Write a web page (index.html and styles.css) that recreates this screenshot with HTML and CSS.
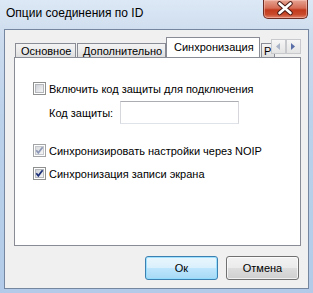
FILE: index.html
```html
<!DOCTYPE html>
<html lang="ru">

<head>
  <meta charset="UTF-8" />
  <title>Опции соединения по ID</title>
  <link rel="stylesheet" href="styles.css">
</head>

<body>
  <div class="window">
    <div class="titlebar">
      <span class="title">Опции соединения по ID</span>
      <div class="close">
        <svg width="45" height="19" viewBox="0 0 45 19">
          <path d="M16.5 4.5 L27.5 14 M27.5 4.5 L16.5 14" stroke="#4a1a14" stroke-width="4.6" stroke-linecap="round" />
          <path d="M16.5 4.5 L27.5 14 M27.5 4.5 L16.5 14" stroke="#ffffff" stroke-width="2.6" stroke-linecap="round" />
        </svg>
      </div>
    </div>

    <div class="client">
      <div class="tabs">
        <div class="tab t1">Основное</div>
        <div class="tab t2">Дополнительно</div>
        <div class="tab active">Синхронизация</div>
        <div class="tab t4">Р</div>
        <div class="scroller">
          <span class="sbtn"><svg width="5" height="7" viewBox="0 0 5 7"><path d="M4 0 L0 3.5 L4 7Z" fill="#aab4c8" /></svg></span>
          <span class="sbtn"><svg width="5" height="7" viewBox="0 0 5 7"><path d="M0 0 L4 3.5 L0 7Z" fill="#5a6fa8" /></svg></span>
        </div>
      </div>

      <div class="panel">
        <label class="row">
          <svg class="cb" width="13" height="13" viewBox="0 0 13 13">
            <defs><linearGradient id="g1" x1="0" y1="0" x2="1" y2="1"><stop offset="0" stop-color="#cbcfd5" /><stop offset="1" stop-color="#f7f7f7" /></linearGradient></defs>
            <rect x="0.5" y="0.5" width="12" height="12" fill="#fff" stroke="#8e8f8f" />
            <rect x="2.5" y="2.5" width="8" height="8" fill="url(#g1)" stroke="#b4b8bd" />
          </svg>
          <span>Включить код защиты для подключения</span>
        </label>

        <div class="field">
          <span>Код защиты:</span>
          <input class="input" type="text">
        </div>

        <label class="row r2">
          <svg class="cb" width="13" height="13" viewBox="0 0 13 13">
            <defs><linearGradient id="g2" x1="0" y1="0" x2="1" y2="1"><stop offset="0" stop-color="#d8dadd" /><stop offset="1" stop-color="#f7f7f7" /></linearGradient></defs>
            <rect x="0.5" y="0.5" width="12" height="12" fill="#fff" stroke="#a3a4a5" />
            <rect x="2.5" y="2.5" width="8" height="8" fill="url(#g2)" stroke="#c4c7cb" />
            <path d="M3.3 6.3 L5.3 8.8 L9.6 3.2" fill="none" stroke="#8c97b6" stroke-width="1.7" />
          </svg>
          <span>Синхронизировать настройки через NOIP</span>
        </label>

        <label class="row r3">
          <svg class="cb" width="13" height="13" viewBox="0 0 13 13">
            <defs><linearGradient id="g3" x1="0" y1="0" x2="1" y2="1"><stop offset="0" stop-color="#cbcfd5" /><stop offset="1" stop-color="#f7f7f7" /></linearGradient></defs>
            <rect x="0.5" y="0.5" width="12" height="12" fill="#fff" stroke="#8e8f8f" />
            <rect x="2.5" y="2.5" width="8" height="8" fill="url(#g3)" stroke="#b4b8bd" />
            <path d="M3.3 6.3 L5.3 8.8 L9.6 3.2" fill="none" stroke="#1c2f79" stroke-width="1.7" />
          </svg>
          <span>Синхронизация записи экрана</span>
        </label>
      </div>

      <div class="buttons">
        <button class="btn default">Ок</button>
        <button class="btn">Отмена</button>
      </div>
    </div>
  </div>
</body>

</html>
```

FILE: styles.css
```css
body {
  margin: 0;
  padding: 0;
  font-family: "Liberation Sans", Arial, sans-serif;
  font-size: 11px;
  color: #000;
}

.window {
  width: 313px;
  height: 293px;
  box-sizing: border-box;
  padding: 0 4px 4px 4px;
  display: flex;
  flex-direction: column;
  background: linear-gradient(180deg, #dce8f5 0%, #cddcee 12%, #bcd2eb 40%, #b3cbe8 100%);
}

.titlebar {
  height: 29px;
  display: flex;
  align-items: flex-start;
}

.title {
  font-size: 12px;
  padding: 6px 0 0 2px;
  color: #000;
}

.close {
  margin-left: auto;
  margin-right: 1px;
  width: 45px;
  height: 19px;
  box-sizing: border-box;
  border: 1px solid #6a2c24;
  border-top: none;
  border-radius: 0 0 5px 5px;
  background: linear-gradient(180deg, #e6a493 0%, #d56c55 45%, #c23a1e 55%, #c94a2c 80%, #e0826a 100%);
  box-shadow: inset 0 0 0 1px rgba(255, 210, 200, 0.45);
}

.close svg {
  display: block;
  margin: -1px 0 0 -1px;
}

.client {
  flex: 1;
  border: 1px solid #7587a0;
  background: #f0f0f0;
  padding: 7px 7px 8px 9px;
  display: flex;
  flex-direction: column;
}

.tabs {
  position: relative;
  height: 20px;
  display: flex;
  align-items: flex-end;
  padding-left: 1px;
  overflow: hidden;
}

.tab {
  box-sizing: border-box;
  height: 14px;
  border: 1px solid #898c95;
  border-bottom: none;
  background: linear-gradient(180deg, #f3f3f3 0%, #ebebeb 50%, #dedede 100%);
  padding: 1px 0 0 5px;
  line-height: 12px;
  white-space: nowrap;
  flex-shrink: 0;
}

.t1 {
  width: 61px;
  margin-right: 1px;
}

.t2 {
  width: 89px;
}

.tab.active {
  width: 94px;
  height: 21px;
  margin-bottom: -1px;
  background: #fff;
  padding: 3px 0 0 7px;
  position: relative;
  z-index: 1;
}

.t4 {
  margin-left: 1px;
  width: 14px;
  padding-left: 2px;
  overflow: hidden;
}

.scroller {
  position: absolute;
  right: 0;
  top: 2px;
  display: flex;
  z-index: 2;
}

.sbtn {
  width: 15px;
  height: 15px;
  box-sizing: border-box;
  border: 1px solid #c8c9cc;
  background: linear-gradient(180deg, #f6f6f6, #e4e4e4);
  display: flex;
  align-items: center;
  justify-content: center;
}

.panel {
  height: 189px;
  box-sizing: border-box;
  border: 1px solid #898c95;
  background: #fff;
  padding: 24px 0 0 18px;
  display: flex;
  flex-direction: column;
  align-items: flex-start;
}

.row {
  display: flex;
  align-items: center;
  gap: 3px;
  height: 13px;
  white-space: nowrap;
}

.cb {
  display: block;
  flex-shrink: 0;
}

.field {
  display: flex;
  align-items: center;
  margin: 6px 0 0 16px;
  height: 23px;
}

.input {
  margin: 0 0 0 7px;
  width: 119px;
  height: 23px;
  box-sizing: border-box;
  border: 1px solid #abadb3;
  border-top-color: #abadb3;
  border-left-color: #d5d7dd;
  border-right-color: #d5d7dd;
  border-bottom-color: #dfe3e9;
  background: #fff;
  padding: 0;
}

.r2 {
  margin-top: 20px;
}

.r3 {
  margin-top: 10px;
}

.buttons {
  margin-top: 10px;
  display: flex;
  justify-content: flex-end;
  gap: 8px;
  padding-right: 2px;
}

.btn {
  width: 73px;
  height: 24px;
  box-sizing: border-box;
  border: 1px solid #707070;
  border-radius: 3px;
  background: linear-gradient(180deg, #f2f2f2 0%, #ebebeb 49%, #dddddd 50%, #cfcfcf 100%);
  box-shadow: inset 0 0 0 1px rgba(255, 255, 255, 0.7);
  font-family: "Liberation Sans", Arial, sans-serif;
  font-size: 11px;
  color: #000;
  padding: 0;
}

.btn.default {
  border-color: #3c7fb1;
  background: linear-gradient(180deg, #eaf6fd 0%, #d9f0fc 49%, #bee6fd 50%, #a7d9f5 100%);
  box-shadow: inset 0 0 0 1px rgba(140, 220, 255, 0.8);
}
```
